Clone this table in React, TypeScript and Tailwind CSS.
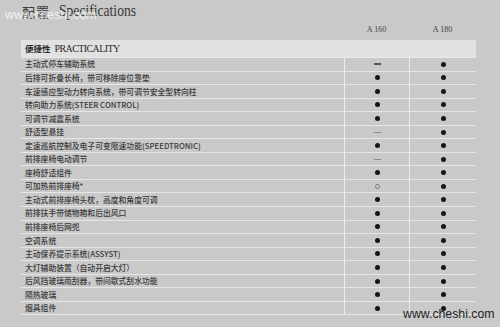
import React from "react";

type Mark = "dot" | "dash" | "dashLight" | "ring";

const rows: [string, Mark, Mark][] = [
  ["主动式停车辅助系统", "dash", "dot"],
  ["后排可折叠长椅，带可移除座位靠垫", "dot", "dot"],
  ["车速感应型动力转向系统，带可调节安全型转向柱", "dot", "dot"],
  ["转向助力系统(STEER CONTROL)", "dot", "dot"],
  ["可调节减震系统", "dot", "dot"],
  ["舒适型悬挂", "dashLight", "dot"],
  ["定速巡航控制及电子可变限速功能(SPEEDTRONIC)", "dot", "dot"],
  ["前排座椅电动调节", "dashLight", "dot"],
  ["座椅舒适组件", "dot", "dot"],
  ["可加热前排座椅*", "ring", "dot"],
  ["主动式前排座椅头枕，高度和角度可调", "dot", "dot"],
  ["前排扶手带储物箱和后出风口", "dot", "dot"],
  ["前排座椅后网兜", "dot", "dot"],
  ["空调系统", "dot", "dot"],
  ["主动保养提示系统(ASSYST)", "dot", "dot"],
  ["大灯辅助装置（自动开启大灯）", "dot", "dot"],
  ["后风挡玻璃雨刮器，带间歇式刮水功能", "dot", "dot"],
  ["隔热玻璃", "dot", "dot"],
  ["烟具组件", "dot", "dot"],
];

function MarkIcon({ m }: { m: Mark }) {
  if (m === "dot") return <span className="block w-[5px] h-[5px] rounded-full bg-[#1a1414]" />;
  if (m === "dash") return <span className="block w-[7px] h-[2px] bg-[#555]" />;
  if (m === "dashLight") return <span className="block w-[7px] h-[1px] bg-[#8a8a8a]" />;
  return <span className="block w-[5px] h-[5px] rounded-full border border-[#777]" />;
}

export default function App() {
  return (
    <div className="relative w-[500px] h-[327px] overflow-hidden bg-[#c9c9c9]">
      <div className="h-[22px] pl-[22px] flex items-end pb-[3px] text-[#383838]">
        <span className="text-[13px] leading-none tracking-[1px]" style={{ fontFamily: '"Liberation Serif", "Noto Sans CJK SC", serif' }}>配置</span>
        <span className="ml-[9px] inline-block origin-left scale-x-[0.8] text-[17px] leading-none" style={{ fontFamily: '"Liberation Serif", serif' }}>Specifications</span>
      </div>
      <div className="h-[16px] ml-[21px] flex items-center text-[8px] text-[#444]" style={{ fontFamily: '"Liberation Serif", serif' }}>
        <div className="w-[323px]" />
        <div className="w-[65px] text-center">A 160</div>
        <div className="w-[67px] text-center">A 180</div>
      </div>
      <div className="mt-[2px] ml-[21px] w-[455px] h-[17px] bg-[#e1e1e1] flex items-center pl-[4px] text-[#2a2a2a]">
        <span className="text-[8.5px] font-bold" style={{ fontFamily: '"Noto Sans CJK SC", sans-serif' }}>便捷性</span>
        <span className="ml-[4px] text-[10px] tracking-[-0.6px]" style={{ fontFamily: '"Liberation Serif", serif' }}>PRACTICALITY</span>
      </div>
      <div className="ml-[21px] w-[455px] border-t border-[#e9e9e9]">
        {rows.map(([label, a, b], i) => (
          <div key={i} className="flex h-[13.56px] border-b border-[#e6e6e6] box-border">
            <div
              className="w-[323px] pl-[4px] flex items-center text-[7.8px] font-medium text-[#3a3a3a] whitespace-nowrap"
              style={{ fontFamily: '"Noto Sans CJK SC", "Noto Sans", sans-serif' }}
            >
              {label}
            </div>
            <div className="w-[65px] border-l border-[#ececec] flex items-center justify-center">
              <MarkIcon m={a} />
            </div>
            <div className="w-[67px] border-l border-[#ececec] flex items-center justify-center">
              <MarkIcon m={b} />
            </div>
          </div>
        ))}
      </div>
      <div
        className="absolute left-[5px] top-[9px] text-[12.3px] leading-none text-white/75"
        style={{ fontFamily: '"Liberation Sans", Arial, sans-serif' }}
      >
        www.cheshi.com
      </div>
      <div
        className="absolute left-[403px] top-[308px] text-[12.3px] leading-none text-[#1e1e1e]"
        style={{ fontFamily: '"Liberation Sans", Arial, sans-serif' }}
      >
        www.cheshi.com
      </div>
    </div>
  );
}
